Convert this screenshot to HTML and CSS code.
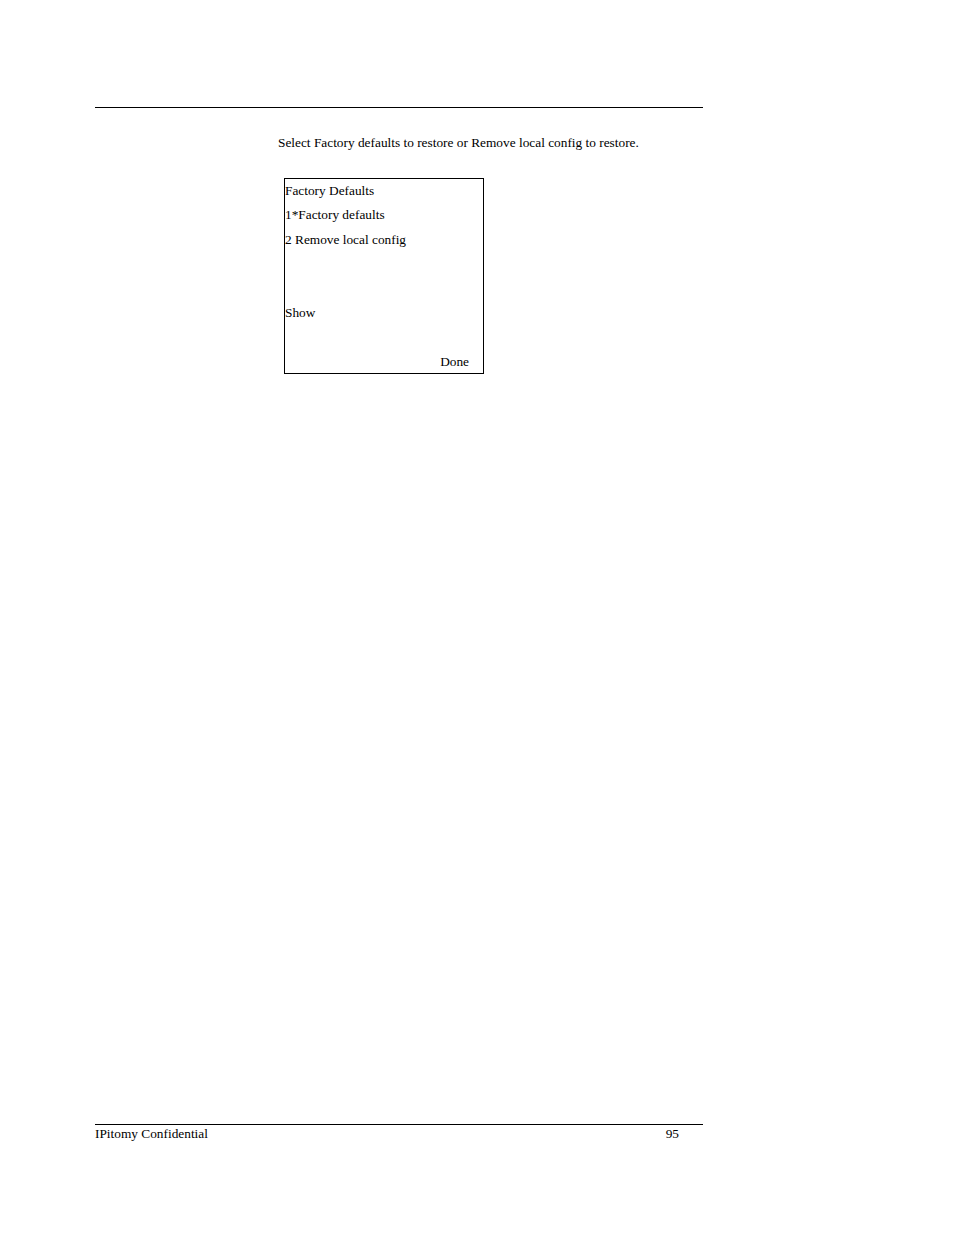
FILE: index.html
```html
<!DOCTYPE html>
<html>
<head>
<meta charset="utf-8">
<link rel="stylesheet" href="styles.css">
</head>
<body>
<div class="page">
  <div class="header-rule"></div>
  <p class="intro">Select Factory defaults to restore or Remove local config to restore.</p>
  <div class="screen">
    <div class="row">Factory Defaults</div>
    <div class="row">1*Factory defaults</div>
    <div class="row">2 Remove local config</div>
    <div class="row"></div>
    <div class="row"></div>
    <div class="row">Show</div>
    <div class="row"></div>
    <div class="row right">Done</div>
  </div>
  <div class="spacer"></div>
  <div class="footer">
    <span>IPitomy Confidential</span>
    <span class="pageno">95</span>
  </div>
</div>
</body>
</html>
```
FILE: styles.css
```css
html, body {
  margin: 0;
  padding: 0;
  background: #fff;
}
.page {
  width: 954px;
  height: 1235px;
  display: flex;
  flex-direction: column;
  font-family: "Liberation Serif", "Times New Roman", serif;
  font-size: 13.33px;
  color: #000;
  box-sizing: border-box;
}
.header-rule {
  margin-top: 107px;
  margin-left: 95px;
  width: 608px;
  height: 0;
  border-top: 1px solid #000;
}
.intro {
  margin: 27px 0 0 278px;
  line-height: 16px;
  height: 16px;
}
.screen {
  margin: 27px 0 0 284px;
  width: 200px;
  box-sizing: border-box;
  border: 1px solid #000;
  padding: 0 14px 0 0;
}
.row {
  height: 24.45px;
  line-height: 24.45px;
  white-space: nowrap;
}
.row.right {
  text-align: right;
  height: 22.5px;
}
.spacer {
  flex: 1;
}
.footer {
  margin-left: 95px;
  width: 608px;
  border-top: 1px solid #000;
  display: flex;
  justify-content: space-between;
  line-height: 16px;
  padding: 1px 24px 0 0;
  box-sizing: border-box;
  margin-bottom: 93px;
}
```
